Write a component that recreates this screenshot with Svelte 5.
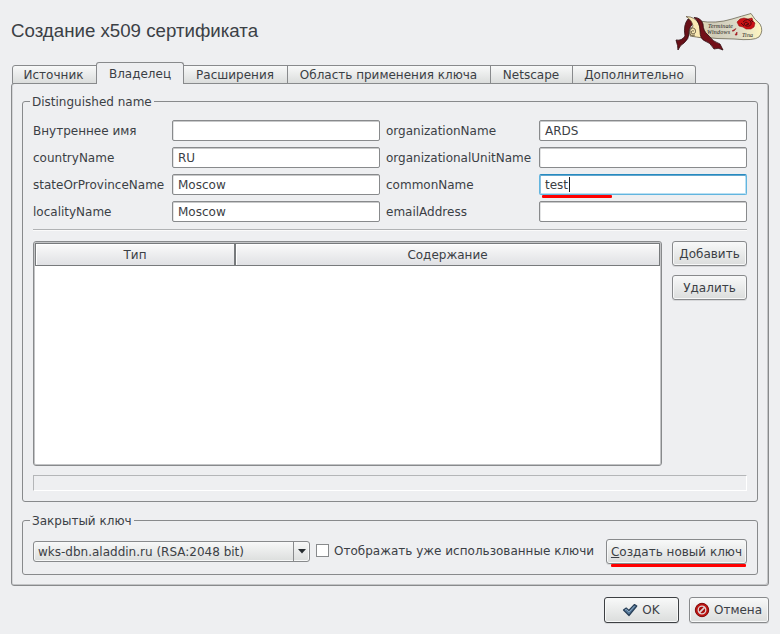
<script>
  const tabs = [
    { label: 'Источник', width: 85 },
    { label: 'Владелец', width: 88, active: true },
    { label: 'Расширения', width: 104 },
    { label: 'Область применения ключа', width: 203 },
    { label: 'Netscape', width: 82 },
    { label: 'Дополнительно', width: 123 }
  ];
  const fields = [
    ['Внутреннее имя', ''], ['organizationName', 'ARDS'],
    ['countryName', 'RU'], ['organizationalUnitName', ''],
    ['stateOrProvinceName', 'Moscow'], ['commonName', 'test'],
    ['localityName', 'Moscow'], ['emailAddress', '']
  ];
</script>

<div class="window">
  <header>
    <h1>Создание x509 сертификата</h1>
    <svg class="logo" width="90" height="42" viewBox="0 0 90 42">
      <defs>
        <linearGradient id="paper" x1="0" y1="0" x2="1" y2="0">
          <stop offset="0" stop-color="#f3e8b8" /><stop offset=".3" stop-color="#cfcbb8" />
          <stop offset=".65" stop-color="#dddbc9" /><stop offset="1" stop-color="#fff6c0" />
        </linearGradient>
      </defs>
      <path d="M25 10Q42 13 58 8Q68 5 77 2.500Q80 8 86 13Q90 20 85 26Q80 30 60 28Q42 28 28 26L18 25Z" fill="url(#paper)" stroke="#5c5745" stroke-width=".7" />
      <path d="M14 8Q17 8 21 11Q15 15 15 22Q15 28 10 32Q6 34 4 39Q4 35 2 29Q8 30 11 25Q9 14 14 8Z" fill="#681018" stroke="#2d0b10" stroke-width=".8" />
      <path d="M12 5.500Q21 5.500 25 13L29 27Q22 26 16 25Q15 19 19 15Q18 9 12 5.500Z" fill="#fae9b4" stroke="#5c5039" stroke-width=".7" />
      <path d="M20 6.500Q27 6.500 29 13Q29 20 34 24Q39 31 46 33L49 39Q44 36 40 38Q36 31 31 30Q26 28 26 20Q26 11 20 6.500Z" fill="#721019" stroke="#2b090e" stroke-width=".8" />
      <path d="M21 24Q15 26 15 20Q17 15 21 18Q23 23 18 23Q16 19 20 20" fill="none" stroke="#4c4130" stroke-width=".8" />
      <g class="script"><text x="34" y="17" textLength="25">Terminate</text><text x="33" y="23" textLength="23">Windows</text><text x="68" y="26" textLength="11">Tina</text></g>
      <path d="M63 11L66 8L70 7L74 8L78 7L79 10L81 12L80 16L77 18L72 18L69 16L65 15Z" fill="#cb1115" stroke="#911015" stroke-width=".6" />
      <path d="M69 11Q74 6 77 11Q78 16 72 15Q68 13 72 11L75 13L72 14M77 9L79 11M67 12L70 15" fill="none" stroke="#4b080d" stroke-width=".9" />
      <path d="M58 20L62 17.500L60 20ZM61 24L63 21L63 24Z" fill="#c51b22" stroke="#931d22" stroke-width=".6" />
    </svg>
  </header>
  <nav>
    {#each tabs as tab}
      <button class="tab" class:active={tab.active} style="width: {tab.width}px">{tab.label}</button>
    {/each}
  </nav>
  <main>
    <section class="group owner">
      <h2>Distinguished name</h2>
      <div class="fields">
        {#each fields as [label, value]}
          <span>{label}</span>
          <div class="input" class:focused={label === 'commonName'}>{value}{#if label === 'commonName'}<i class="caret"></i><i class="mark"></i>{/if}</div>
        {/each}
      </div>
      <div class="rule"></div>
      <div class="entries">
        <div class="table">
          <div class="columns"><div class="type">Тип</div><div class="content">Содержание</div></div>
        </div>
        <div class="actions"><button>Добавить</button><button>Удалить</button></div>
      </div>
      <div class="status"></div>
    </section>
    <section class="group key">
      <h2>Закрытый ключ</h2>
      <div class="keyrow">
        <div class="combo"><span>wks-dbn.aladdin.ru (RSA:2048 bit)</span><div class="arrow"><svg width="8" height="5" viewBox="0 0 8 5"><path d="M0 0H8L4 4.5Z" fill="#272c30" /></svg></div></div>
        <div class="check"></div>
        <span class="checklabel">Отображать уже использованные ключи</span>
        <button class="create"><span><u>С</u>оздать новый ключ</span><i class="mark"></i></button>
      </div>
    </section>
  </main>
  <footer>
    <button class="ok">
      <svg width="16" height="16" viewBox="0 0 16 16"><path d="M1.500 8L4.200 6L6.800 8.500L12.500 2.500L14.800 4L7 13.500Z" fill="#55799b" stroke="#283f57" stroke-width="1.200" stroke-linejoin="round" /><path d="M3 8L4.500 7.300L7 10L12.500 4" fill="none" stroke="#8ba8c2" /></svg>
      <span>OK</span>
    </button>
    <button class="cancel">
      <svg width="16" height="16" viewBox="0 0 16 16"><circle cx="8" cy="8" r="6.700" fill="#bd1512" stroke="#7f0808" /><circle cx="8" cy="8" r="3.800" fill="#a80d0b" stroke="#dfd5d5" stroke-width="1.300" /><path d="M5.200 10.800L10.800 5.200" stroke="#dfd5d5" stroke-width="1.700" /></svg>
      <span>Отмена</span>
    </button>
  </footer>
</div>

<style>
  :global(body) { margin: 0; background: #eeeff1; }
  .window { width: 780px; height: 634px; padding: 0 11px; box-sizing: border-box; background: #eeeff1; color: #3b4045; font: 12px/15px "DejaVu Sans", sans-serif; overflow: hidden; }
  .window * { box-sizing: border-box; }
  header { height: 62px; display: flex; justify-content: space-between; padding-top: 11px; }
  h1 { margin: 8px 0 0; font: 18.7px/24px "Liberation Sans", sans-serif; white-space: nowrap; }
  .logo { margin-right: 5px; }
  .script { font: italic 6px "Liberation Serif", serif; fill: #252320; }
  nav { display: flex; align-items: flex-end; height: 22px; padding-left: 1px; position: relative; z-index: 1; }
  button { font: inherit; color: inherit; white-space: nowrap; margin: 0; padding: 2px 0 0; border: 1px solid #888a8c; border-radius: 3px; background: linear-gradient(#f8f9f9, #dbdddc); box-shadow: inset 0 0 0 1px #f7f8f8, 0 1px #d7d8da; }
  .tab { height: 19px; padding: 1px 1px 0 0; border-left-width: 0; border-radius: 0; box-shadow: none; }
  .tab:first-child { padding-right: 2px; border-left-width: 1px; border-radius: 3px 0 0 0; }
  .tab:last-child { padding-right: 0; border-radius: 0 3px 0 0; }
  .tab.active { height: 22px; border: 1px solid #888a8c; border-bottom: 0; border-radius: 3px 3px 0 0; background: #eeeff1; padding: 1px 0 0; margin-left: -1px; }
  main { width: 758px; height: 503px; margin-top: -1px; border: 1px solid #888a8c; border-radius: 3px; box-shadow: inset -1px -1px #c3c4c6, inset 1px 0 #d5d6d8; padding: 17px 10px 0; }
  .group { width: 736px; border: 1px solid #888a8c; border-radius: 3px; position: relative; padding: 0 10px; }
  h2 { position: absolute; left: 7px; top: -7px; margin: 0; padding: 0 2px; background: #eeeff1; font: inherit; white-space: nowrap; }
  .owner { height: 401px; padding-top: 18px; }
  .fields { display: grid; grid-template-columns: 139px 208px 159px 208px; grid-auto-rows: 21px; row-gap: 6px; align-items: center; }
  .fields > span { padding-top: 2px; }
  .fields > span:nth-child(4n + 3) { padding-left: 6px; }
  .input { height: 21px; border: 1px solid #888a8c; border-radius: 2px; background: white; padding: 3px 5px 0; position: relative; box-shadow: inset 0 1px #c8c9ca, inset 1px 0 #e3e4e5; }
  .focused { border-color: #62b5df; border-top-color: #278ac0; box-shadow: inset 0 1px #62a7ce, inset 1px 0 #8fc3df, inset -1px 0 #b9e0f3, inset 0 -1px #b9e0f3; }
  .caret { position: absolute; left: 29px; top: 2px; width: 1px; height: 15px; background: #202326; }
  .mark { position: absolute; height: 3px; background: #f00; border-radius: 1px; }
  .input .mark { left: 2px; top: 20px; width: 70px; }
  .rule { height: 2px; margin-top: 7px; border-top: 1px solid #b0b2b4; border-bottom: 1px solid #fafafa; }
  .entries { display: flex; margin-top: 10px; gap: 10px; height: 225px; }
  .table { width: 629px; height: 225px; background: white; border: 1px solid #888a8c; border-radius: 3px; box-shadow: inset 0 0 0 1px #c3c4c6; padding: 1px; }
  .columns { display: flex; height: 23px; text-align: center; }
  .columns div { border: 1px solid #777a7c; padding-top: 4px; background: linear-gradient(#fafafa, #e0e1e4); box-shadow: inset 1px 1px #fff; }
  .type { width: 200px; }
  .content { flex: 1; }
  .actions { width: 75px; display: flex; flex-direction: column; gap: 9px; }
  .actions button { height: 25px; }
  .status { height: 16px; margin-top: 9px; border: 1px solid; border-color: #b4b6b8 #fff #fff #b4b6b8; }
  .key { height: 55px; margin-top: 18px; padding-top: 18px; }
  .keyrow { display: flex; align-items: flex-start; }
  .combo { width: 277px; height: 21px; margin-top: 2px; display: flex; justify-content: space-between; border: 1px solid #888a8c; border-radius: 3px; background: linear-gradient(#f7f8f8, #dcdedd); box-shadow: inset 0 0 0 1px #f7f8f8; padding-left: 4px; }
  .combo span { padding-top: 3px; }
  .arrow { width: 16px; border-left: 1px solid #888a8c; display: flex; align-items: center; justify-content: center; }
  .check { width: 13px; height: 13px; margin: 5px 5px 0 6px; border: 1px solid #888a8c; background: white; }
  .checklabel { margin-top: 5px; white-space: nowrap; }
  .create { width: 141px; height: 25px; margin-left: auto; position: relative; }
  .create .mark { left: 4px; top: 24px; width: 135px; }
  footer { display: flex; justify-content: flex-end; gap: 10px; margin-top: 11px; }
  footer button { height: 26px; padding: 0; display: flex; align-items: center; justify-content: center; gap: 4px; }
  .ok { width: 75px; border-color: #3d4043; padding-right: 1px; }
  .cancel { width: 80px; padding-right: 2px; }
</style>
